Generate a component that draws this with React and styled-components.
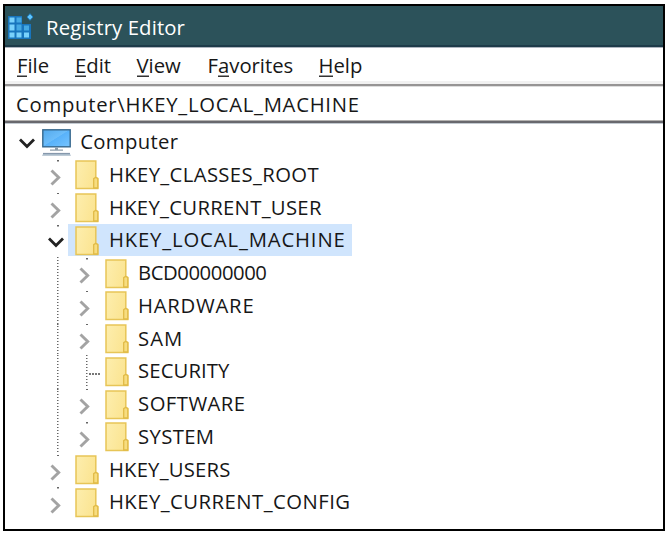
import React from 'react';
import styled, { createGlobalStyle } from 'styled-components';

const GlobalStyle = createGlobalStyle`
  * { box-sizing: border-box; }
  body { margin: 0; background: #fff; overflow: hidden; }
`;

const Desktop = styled.div`
  width: 672px;
  height: 536px;
  padding: 4px 0 0 3px;
  background: #fff;
  font-family: 'Open Sans', 'Noto Sans', sans-serif;
  font-size: 20.3px;
  color: #171717;
`;

const Window = styled.div`
  display: flex;
  flex-direction: column;
  width: 662px;
  height: 527px;
  border: 2px solid #000;
  background: #fff;
  overflow: hidden;
`;

const Text = styled.span`
  white-space: pre;
  line-height: 32px;
  letter-spacing: ${(p) => p.$track || 0}px;
`;

const TitleBar = styled.header`
  display: flex;
  align-items: center;
  gap: 12px;
  height: 41px;
  padding: 2px 0 0 2px;
  flex: none;
  color: #fff;
  background: #2c525a;
  border-bottom: 2px solid #1d3b49;
`;

const MenuBar = styled.nav`
  display: flex;
  height: 39px;
  flex: none;
  padding: 1px 0 0 12px;
  border-top: 1px solid #aeb5bf;
  border-bottom: 2px solid #969494;
  background: linear-gradient(#fff 0 33px, #f1f1f1 33px);
`;

const MenuItem = styled.div`
  width: ${(p) => p.$width}px;
  u { text-decoration: none; box-shadow: inset 0 -1.5px #333; display: inline-block; line-height: 23px; }
`;

const AddressBar = styled.div`
  height: 38px;
  flex: none;
  padding: 1px 0 0 11px;
  border-top: 1px solid #ddd;
  border-bottom: 1px solid #c3cad1;
  box-shadow: inset 0 -2px #68686d, inset 0 -3px #b4b2b0;
`;

const Tree = styled.ul`
  margin: 0;
  padding: 2px 0 0 7px;
  list-style: none;
`;

const Row = styled.li`
  display: flex;
  height: 32.75px;
  align-items: stretch;
`;

const dots = 'repeating-linear-gradient(#666 0 1.5px, transparent 1.5px 2.98px)';

const Cell = styled.span`
  display: flex;
  width: 29.2px;
  flex: none;
  align-items: center;
  justify-content: center;
  background: ${(p) => (p.$line ? `${dots} 16px ${p.$line === 'full' ? '0 / 1.5px 100%' : '1px / 2px 1.5px'} no-repeat` : 'none')};
  svg { margin-top: ${(p) => (p.$low ? 5 : 3)}px; }
`;

const Branch = styled.span`
  width: 12px;
  height: 1.5px;
  margin: 5px 0 0 19px;
  background: repeating-linear-gradient(90deg, #777 0 1.5px, transparent 1.5px 3px);
`;

const Label = styled.span`
  display: flex;
  align-items: center;
  height: 32px;
  margin-left: -2px;
  padding: 0 6px 0 ${(p) => (p.$root ? 3 : 7)}px;
  background: ${(p) => (p.$selected ? '#d0e5fd' : 'transparent')};
  svg { margin: 1px ${(p) => (p.$root ? 9 : 9.5)}px 0 0; flex: none; }
  ${Text} { line-height: 30px; height: 32px; }
`;

const RegistryIcon = () => (
  <svg width="27" height="28" viewBox="0 0 27 28">
    <path d="M1 3H15V11H24V26H1Z" fill="#1875bd" />
    <path d="M2.5 4.5h5v5h-5zM2.5 11.5h5v6h-5zM2.5 19.5h5v5h-5zM9.5 19.5h5v5h-5zM17 19.5h5v5h-5z" fill="#79d1fb" />
    <path d="M9.5 4.5h5v5h-5zM9.5 11.5h5v6h-5zM17 12.5h5v5h-5z" fill="#45a9e3" />
    <path d="M23 .7l3 3.3-3 3.3-3-3.3z" fill="#5fc5fc" stroke="#2382c4" />
  </svg>
);

const ComputerIcon = () => (
  <svg width="29" height="27" viewBox="0 0 29 27">
    <defs>
      <linearGradient id="screen" x2="1" y2="1">
        <stop stopColor="#53a9eb" /><stop offset=".48" stopColor="#6cbdfa" />
        <stop offset=".5" stopColor="#58b2fa" /><stop offset="1" stopColor="#76c4ff" />
      </linearGradient>
    </defs>
    <rect x=".8" y=".8" width="27.4" height="17" fill="url(#screen)" stroke="#37688d" strokeWidth="1.4" />
    <path d="M13 18.5h3v2h-3zM8 20.4h13v1.3H8z" fill="#8d9daa" />
    <path d="M1.5 24.3h26l1.5 2.5H0z" fill="#a8bac9" />
    <path d="M1 24.4h27" stroke="#8092a7" />
  </svg>
);

const FolderIcon = () => (
  <svg width="24" height="30" viewBox="0 0 24 30">
    <defs>
      <linearGradient id="folder" x2="1" y2=".3">
        <stop stopColor="#fdeeae" /><stop offset="1" stopColor="#fbe491" />
      </linearGradient>
    </defs>
    <path d="M1 1H20.8V17.3L22.8 18.5V28.5H1Z" fill="url(#folder)" stroke="#e7c557" strokeWidth="1.5" />
    <path d="M18.7 28V18.7L20.8 17.2L22.8 18.7V28Z" fill="#f7dd80" stroke="#e1bb47" strokeWidth="1.3" />
  </svg>
);

const Chevron = ({ open }) => open ? (
  <svg width="16" height="11" viewBox="0 0 16 11"><path d="M1 1.5L8 8.5L15 1.5" fill="none" stroke="#222" strokeWidth="2.8" /></svg>
) : (
  <svg width="11" height="17" viewBox="0 0 11 17"><path d="M1.5 1.5L8.7 8.5L1.5 15.5" fill="none" stroke="#a3a3a3" strokeWidth="2.9" /></svg>
);

const menus = [
  ['', 'F', 'ile', 58], ['', 'E', 'dit', 61.5], ['', 'V', 'iew', 71], ['F', 'a', 'vorites', 111], ['', 'H', 'elp', 60],
];

const keys = [
  { name: 'Computer', depth: 0, open: true, track: 0.35 },
  { name: 'HKEY_CLASSES_ROOT', depth: 1, track: 0.37 },
  { name: 'HKEY_CURRENT_USER', depth: 1, track: 0.3 },
  { name: 'HKEY_LOCAL_MACHINE', depth: 1, open: true, selected: true, track: 0.86 },
  { name: 'BCD00000000', depth: 2, track: -0.45 },
  { name: 'HARDWARE', depth: 2, track: 0.75 },
  { name: 'SAM', depth: 2, track: 1 },
  { name: 'SECURITY', depth: 2, leaf: true, track: 0.1 },
  { name: 'SOFTWARE', depth: 2, track: 0.45 },
  { name: 'SYSTEM', depth: 2, track: 0.35 },
  { name: 'HKEY_USERS', depth: 1, track: 0.2 },
  { name: 'HKEY_CURRENT_CONFIG', depth: 1, track: 0.47 },
];

const TreeRow = ({ item }) => (
  <Row>
    {item.depth > 0 && <Cell />}
    {item.depth > 1 && <Cell $line="full" />}
    <Cell $line={item.leaf ? 'full' : item.depth ? 'top' : null} $low={!item.open}>
      {item.leaf ? <Branch /> : <Chevron open={item.open} />}
    </Cell>
    <Label $root={!item.depth} $selected={item.selected}>
      {item.depth ? <FolderIcon /> : <ComputerIcon />}
      <Text $track={item.track}>{item.name}</Text>
    </Label>
  </Row>
);

export default function App() {
  return (
    <Desktop>
      <GlobalStyle />
      <Window>
        <TitleBar><RegistryIcon /><Text $track={0.12}>Registry Editor</Text></TitleBar>
        <MenuBar>
          {menus.map(([pre, key, post, width]) => (
            <MenuItem key={post} $width={width}><Text>{pre}<u>{key}</u>{post}</Text></MenuItem>
          ))}
        </MenuBar>
        <AddressBar><Text $track={0.72}>Computer\HKEY_LOCAL_MACHINE</Text></AddressBar>
        <Tree>{keys.map((item) => <TreeRow key={item.name} item={item} />)}</Tree>
      </Window>
    </Desktop>
  );
}
